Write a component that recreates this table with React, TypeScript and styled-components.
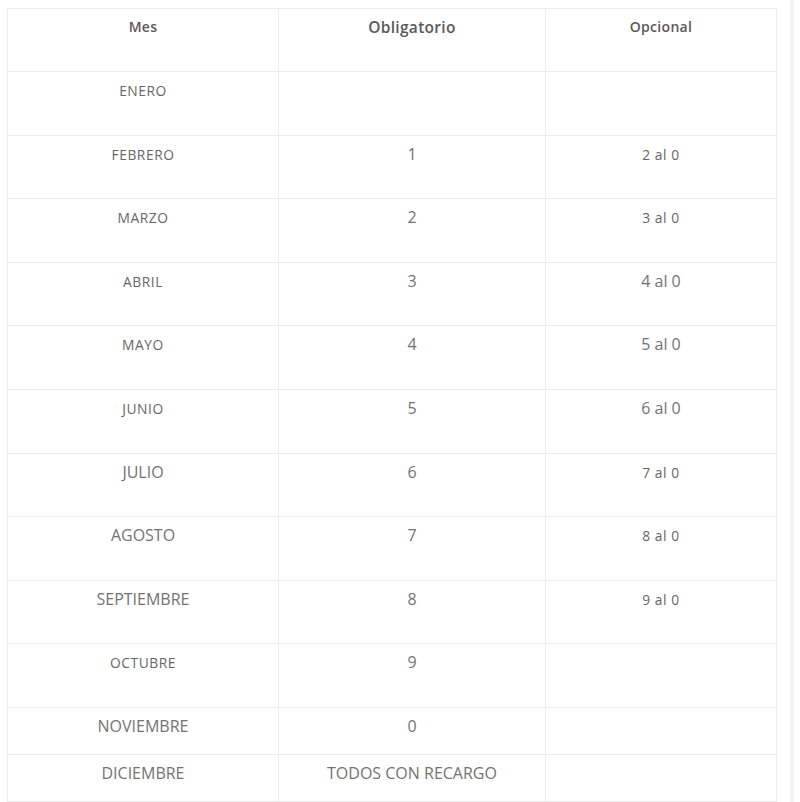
import React from "react";
import styled, { createGlobalStyle } from "styled-components";

const Global = createGlobalStyle`
  html, body { margin: 0; padding: 0; background: #fff; }
  body { font-family: "Open Sans", "Liberation Sans", sans-serif; color: #666; }
`;

const Page = styled.div`
  display: flex;
  align-items: flex-start;
  padding: 8px 0 0 7px;
  height: 794px;
`;

const Table = styled.table`
  border-collapse: collapse;
  width: 770px;
  table-layout: fixed;
  border: 1px solid #ececec;
`;

const Sidebar = styled.div`
  margin-left: 13px;
  width: 4px;
  align-self: stretch;
  background: #f4f4f4;
  margin-top: -8px;
`;

type Size = "s" | "l";

const Row = styled.tr<{ $tall: boolean }>`
  height: ${(p) => (p.$tall ? "63.6px" : "47px")};
`;

const Cell = styled.td<{ $size?: Size }>`
  border: 1px solid #ececec;
  text-align: center;
  vertical-align: top;
  padding: ${(p) => (p.$size === "s" ? "7px" : "6px")} 4px 0;
  font-size: ${(p) => (p.$size === "s" ? "13.8px" : "16px")};
  letter-spacing: ${(p) => (p.$size === "s" ? "0.55px" : "0")};
  line-height: 24px;
  color: ${(p) => (p.$size === "s" ? "#666" : "#737373")};
  font-weight: 400;
`;

const Head = styled.th<{ $fs: number }>`
  border: 1px solid #ececec;
  text-align: center;
  vertical-align: top;
  padding: 6px 4px 0;
  height: 56px;
  box-sizing: content-box;
  font-size: ${(p) => p.$fs}px;
  letter-spacing: 0.3px;
  line-height: 24px;
  font-weight: 600;
  color: #5a5a5a;
`;

type Val = { t: string; s: Size } | null;
const rows: { mes: Val; ob: Val; op: Val; tall: boolean }[] = [
  { mes: { t: "ENERO", s: "s" }, ob: null, op: null, tall: true },
  { mes: { t: "FEBRERO", s: "s" }, ob: { t: "1", s: "l" }, op: { t: "2 al 0", s: "s" }, tall: true },
  { mes: { t: "MARZO", s: "s" }, ob: { t: "2", s: "l" }, op: { t: "3 al 0", s: "s" }, tall: true },
  { mes: { t: "ABRIL", s: "s" }, ob: { t: "3", s: "l" }, op: { t: "4 al 0", s: "l" }, tall: true },
  { mes: { t: "MAYO", s: "s" }, ob: { t: "4", s: "l" }, op: { t: "5 al 0", s: "l" }, tall: true },
  { mes: { t: "JUNIO", s: "s" }, ob: { t: "5", s: "l" }, op: { t: "6 al 0", s: "l" }, tall: true },
  { mes: { t: "JULIO", s: "l" }, ob: { t: "6", s: "l" }, op: { t: "7 al 0", s: "s" }, tall: true },
  { mes: { t: "AGOSTO", s: "l" }, ob: { t: "7", s: "l" }, op: { t: "8 al 0", s: "s" }, tall: true },
  { mes: { t: "SEPTIEMBRE", s: "l" }, ob: { t: "8", s: "l" }, op: { t: "9 al 0", s: "s" }, tall: true },
  { mes: { t: "OCTUBRE", s: "s" }, ob: { t: "9", s: "l" }, op: null, tall: true },
  { mes: { t: "NOVIEMBRE", s: "l" }, ob: { t: "0", s: "l" }, op: null, tall: false },
  { mes: { t: "DICIEMBRE", s: "l" }, ob: { t: "TODOS CON RECARGO", s: "l" }, op: null, tall: false },
];

const C = ({ v }: { v: Val }) => <Cell $size={v?.s ?? "l"}>{v?.t ?? ""}</Cell>;

export default function App() {
  return (
    <>
      <Global />
      <Page>
        <Table>
          <colgroup>
            <col style={{ width: 271 }} />
            <col style={{ width: 267 }} />
            <col style={{ width: 231 }} />
          </colgroup>
          <thead>
            <tr>
              <Head $fs={14}>Mes</Head>
              <Head $fs={15.5}>Obligatorio</Head>
              <Head $fs={14}>Opcional</Head>
            </tr>
          </thead>
          <tbody>
            {rows.map((r, i) => (
              <Row key={i} $tall={r.tall}>
                <C v={r.mes} />
                <C v={r.ob} />
                <C v={r.op} />
              </Row>
            ))}
          </tbody>
        </Table>
        <Sidebar />
      </Page>
    </>
  );
}
